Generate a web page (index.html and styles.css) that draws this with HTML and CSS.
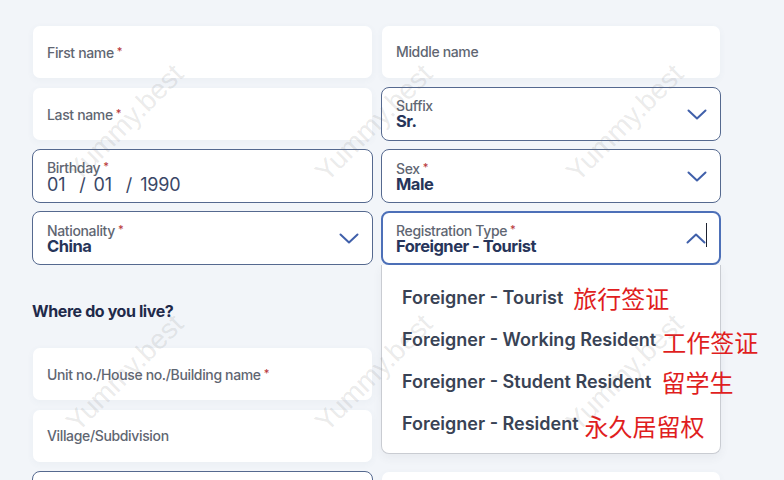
FILE: index.html
```html
<!DOCTYPE html>
<html>
<head>
<meta charset="utf-8">
<link rel="stylesheet" href="styles.css">
</head>
<body>
<div class="page">
  <div class="grid">
    <div class="field empty"><span class="lbl">First name<i class="req">*</i></span></div>
    <div class="field empty"><span class="lbl">Middle name</span></div>

    <div class="field empty"><span class="lbl">Last name<i class="req">*</i></span></div>
    <div class="field filled">
      <div class="txt"><span class="lbl">Suffix</span><span class="val">Sr.</span></div>
      <svg class="chev" viewBox="0 0 20 11"><path d="M1.5 1.5 L10 9.5 L18.5 1.5"/></svg>
    </div>

    <div class="field filled">
      <div class="txt"><span class="lbl">Birthday<i class="req">*</i></span><span class="val date"><span>01</span><span class="sl">/</span><span>01</span><span class="sl">/</span><span>1990</span></span></div>
    </div>
    <div class="field filled">
      <div class="txt"><span class="lbl">Sex<i class="req">*</i></span><span class="val">Male</span></div>
      <svg class="chev" viewBox="0 0 20 11"><path d="M1.5 1.5 L10 9.5 L18.5 1.5"/></svg>
    </div>

    <div class="field filled">
      <div class="txt"><span class="lbl">Nationality<i class="req">*</i></span><span class="val">China</span></div>
      <svg class="chev" viewBox="0 0 20 11"><path d="M1.5 1.5 L10 9.5 L18.5 1.5"/></svg>
    </div>
    <div class="field filled open">
      <div class="txt"><span class="lbl">Registration Type<i class="req">*</i></span><span class="val">Foreigner - Tourist</span></div>
      <svg class="chev" viewBox="0 0 20 11"><path d="M1.5 9.5 L10 1.5 L18.5 9.5"/></svg>
      <span class="caret"></span>
      <ul class="menu">
        <li>Foreigner - Tourist<span class="note">旅行签证</span></li>
        <li>Foreigner - Working Resident<span class="note tight">工作签证</span></li>
        <li>Foreigner - Student Resident<span class="note">留学生</span></li>
        <li>Foreigner - Resident<span class="note tight">永久居留权</span></li>
      </ul>
    </div>
  </div>

  <h2 class="heading">Where do you live?</h2>

  <div class="grid">
    <div class="field empty"><span class="lbl">Unit no./House no./Building name<i class="req">*</i></span></div>
    <div class="field empty"><span class="lbl">Street</span></div>
    <div class="field empty"><span class="lbl">Village/Subdivision</span></div>
    <div class="spacer"></div>
    <div class="field filled"></div>
    <div class="field empty"></div>
  </div>

  <span class="wm w1">Yummy.best</span>
  <span class="wm w2">Yummy.best</span>
  <span class="wm w3">Yummy.best</span>
  <span class="wm w4">Yummy.best</span>
  <span class="wm w5">Yummy.best</span>
  <span class="wm w6">Yummy.best</span>
</div>
</body>
</html>
```

FILE: styles.css
```css
* { box-sizing: border-box; }

html, body {
  margin: 0;
  height: 100%;
  overflow: hidden;
}

body {
  background: #f2f5f9;
  font-family: Inter, "Noto Sans", sans-serif;
  color: #5c6370;
}

.page {
  position: relative;
  width: 784px;
  height: 480px;
  overflow: hidden;
  padding: 25px 0 0 32px;
}

.grid {
  display: grid;
  grid-template-columns: 341px 340px;
  grid-auto-rows: 54px;
  column-gap: 8px;
  row-gap: 8px;
}

.field {
  position: relative;
  display: flex;
  align-items: center;
  padding: 0 13px 0 14px;
  border: 1px solid #55698f;
  border-radius: 8px;
  background: #fff;
}

.field.empty {
  border-color: transparent;
  background-clip: padding-box;
  box-shadow: 0 2px 6px rgba(80, 100, 140, 0.04);
}

.field.open {
  border: 2px solid #4d70b8;
  padding: 0 12px 0 13px;
}

.txt {
  flex: 1;
  display: flex;
  flex-direction: column;
}

.lbl {
  font-size: 14px;
  line-height: 14px;
  font-weight: 500;
  letter-spacing: -0.35px;
  color: #5f6672;
  white-space: nowrap;
}

.req {
  font-style: normal;
  color: #b8383b;
  font-size: 11px;
  margin-left: 3px;
  vertical-align: 3px;
}

.val {
  font-size: 16.5px;
  line-height: 16px;
  font-weight: 700;
  letter-spacing: -0.5px;
  color: #27355a;
  white-space: nowrap;
}

.val.date {
  font-size: 18px;
  font-weight: 400;
  letter-spacing: -0.2px;
  color: #3a4766;
  display: flex;
  padding-top: 2px;
}

.sl {
  margin: 0 8px 0 14px;
}

.chev {
  width: 20px;
  height: 11px;
  flex: none;
}

.chev path {
  fill: none;
  stroke: #4060aa;
  stroke-width: 2;
  stroke-linecap: round;
  stroke-linejoin: round;
}

.caret {
  width: 1px;
  height: 24px;
  background: #1d2230;
  margin-top: -6px;
  flex: none;
}

.menu {
  position: absolute;
  top: calc(100% + 2px);
  left: -2px;
  right: -2px;
  margin: 0;
  padding: 11px 0 9px 20px;
  list-style: none;
  background: #fff;
  border: 1px solid #c9ccd2;
  border-top: none;
  border-radius: 0 0 8px 8px;
  box-shadow: 0 4px 10px rgba(60, 70, 90, 0.06);
  z-index: 2;
}

.menu li {
  height: 42px;
  display: flex;
  align-items: center;
  font-size: 18px;
  font-weight: 600;
  letter-spacing: 0;
  color: #394355;
  white-space: nowrap;
}

.note {
  font-family: "Noto Sans CJK SC", sans-serif;
  font-size: 24px;
  font-weight: 400;
  color: #e01e1e;
  margin-left: 10px;
}

.note.tight {
  margin-left: 6px;
  padding-top: 4px;
}

.heading {
  margin: 36px 0 26px;
  font-size: 16px;
  line-height: 20px;
  font-weight: 700;
  letter-spacing: -0.4px;
  color: #1f2a4a;
}

.wm {
  position: absolute;
  z-index: 5;
  font-family: "Liberation Sans", sans-serif;
  font-size: 28px;
  color: rgba(110, 110, 110, 0.15);
  white-space: nowrap;
  transform: translate(-50%, -50%) rotate(-45deg);
  pointer-events: none;
}

.w1 { left: 125px; top: 123px; }
.w2 { left: 374px; top: 123px; }
.w3 { left: 625px; top: 123px; }
.w4 { left: 125px; top: 373px; }
.w5 { left: 374px; top: 373px; }
.w6 { left: 625px; top: 373px; }
```
